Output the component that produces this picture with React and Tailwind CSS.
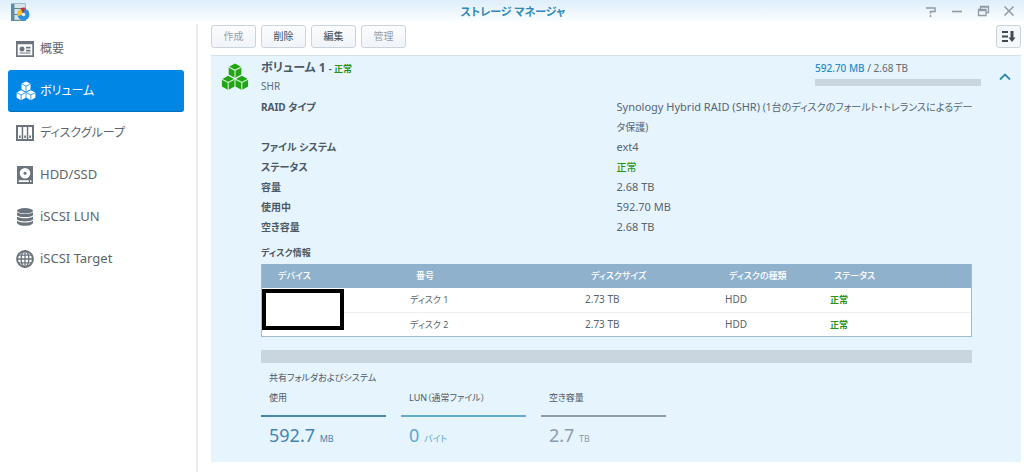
import React from 'react';

const OverviewIcon = () => (
  <svg width="18" height="18" viewBox="0 0 18 18" fill="currentColor" aria-hidden="true">
    <path fillRule="evenodd" d="M0 1h18v16H0V1zm1.7 3.2v11.1h14.6V4.200z" />
    <circle cx="6" cy="9" r="2.500" />
    <path d="M10 6.800h4.500v1.700H10zM10 9.800h4.500v1.700H10zM3.500 12.600h11v1h-11z" />
  </svg>
);

const CubesIcon = ({ size, fill, line }) => (
  <svg width={size} height={size} viewBox="0 0 28 28" aria-hidden="true">
    {[[14, 7.6], [7.2, 19.8], [20.8, 19.8]].map(([x, y]) => (
      <g key={x} transform={`translate(${x} ${y})`}>
        <path d="M0-7L6.300-3.600V3.800L0 7.300-6.300 3.800V-3.600z" fill={fill} />
        <path d="M-6.300-3.600L0-.3 6.300-3.600M0-.3V7.300" fill="none" stroke={line} strokeWidth="1.100" />
      </g>
    ))}
  </svg>
);

const GroupIcon = () => (
  <svg width="18" height="18" viewBox="0 0 18 18" fill="currentColor" aria-hidden="true">
    <path
      fillRule="evenodd"
      d="M0 1h18v16H0zM2 3v12h3.700V3zM7.200 3v12h3.600V3zM12.300 3v12H16V3z"
    />
    <path d="M3 11.500h1.700V14H3zM8.200 11.500h1.700V14H8.200zM13.300 11.500H15V14h-1.700z" />
  </svg>
);

const DriveIcon = () => (
  <svg width="18" height="18" viewBox="0 0 18 18" fill="currentColor" aria-hidden="true">
    <path
      fillRule="evenodd"
      d="M1 0h16v18H1zM9 2a5.300 5.300 0 1 0 0 10.600A5.300 5.300 0 0 0 9 2zM2.800 14.200v1.800h10v-1.800zM14 14.200v1.800h1.400v-1.800z"
    />
    <circle cx="9" cy="7.300" r="1.500" />
  </svg>
);

const LunIcon = () => (
  <svg width="18" height="18" viewBox="0 0 18 18" fill="currentColor" aria-hidden="true">
    <ellipse cx="9" cy="2.800" rx="8" ry="2.700" />
    <path d="M1 4.200c2 2.400 14 2.400 16 0v3c-2 2.500-14 2.500-16 0z" />
    <path d="M1 8.500c2 2.400 14 2.400 16 0v3c-2 2.500-14 2.500-16 0z" />
    <path d="M1 12.800c2 2.400 14 2.400 16 0v2.500c-2 3.400-14 3.400-16 0z" />
  </svg>
);

const TargetIcon = () => (
  <svg width="18" height="18" viewBox="0 0 18 18" fill="none" stroke="currentColor" strokeWidth="1.300" aria-hidden="true">
    <circle cx="9" cy="9" r="7.900" strokeWidth="2" />
    <ellipse cx="9" cy="9" rx="3.900" ry="8" />
    <path d="M9 1v16M1 9h16M2.500 5.200h13M2.500 12.800h13" />
  </svg>
);

const AppIcon = () => (
  <svg width="20" height="19" viewBox="0 0 20 19" aria-hidden="true">
    <rect x="1" y="0" width="15" height="18" rx="1" fill="#9dbdcc" />
    <path d="M1 1h3v17H1z" fill="#5c8ca5" />
    <path d="M5 1h10v4H5zM5 6h10v5H5zM5 12h10v5H5z" fill="#d5e5ec" />
    <path d="M4 5.500h12M4 11.500h12M4 17.300h12" stroke="#60879a" strokeWidth="1" />
    <circle cx="13.500" cy="11.500" r="6" fill="#2f8fdc" />
    <path d="M13.500 11.500L7.500 13A6.500 6.500 0 0 1 11 5.800z" fill="#f3c231" />
    <path d="M13.500 11.500L10.500 5.300a7 7 0 0 1 4.500-.8z" fill="#c5312e" />
    <circle cx="13.500" cy="11.500" r="1.800" fill="#e2eff6" />
  </svg>
);

const navItems = [
  { name: '概要', icon: <OverviewIcon />, size: 'text-xs' },
  { name: 'ボリューム', icon: <CubesIcon size={20} fill="#ffffff" line="#0086e5" />, size: 'text-xs', active: true },
  { name: 'ディスクグループ', icon: <GroupIcon />, size: 'text-xs' },
  { name: 'HDD/SSD', icon: <DriveIcon />, size: 'text-[13px]' },
  { name: 'iSCSI LUN', icon: <LunIcon />, size: 'text-[13px]' },
  { name: 'iSCSI Target', icon: <TargetIcon />, size: 'text-[13px]' },
];

const actions = [
  { name: '作成', disabled: true },
  { name: '削除' },
  { name: '編集' },
  { name: '管理', disabled: true },
];

const details = [
  {
    label: 'RAID タイプ',
    value: 'Synology Hybrid RAID (SHR) ',
    note: '(1台のディスクのフォールト・トレランスによるデータ保護)',
  },
  { label: 'ファイル システム', value: 'ext4' },
  { label: 'ステータス', value: '正常', ok: true },
  { label: '容量', value: '2.68 TB' },
  { label: '使用中', value: '592.70 MB' },
  { label: '空き容量', value: '2.68 TB' },
];

const disks = ['ディスク 1', 'ディスク 2'];

const usage = [
  { label: '使用', value: '592.7', unit: 'MB', line: 'border-[#4a86a8]', text: 'text-[#4583b4]' },
  { label: 'LUN（通常ファイル）', value: '0', unit: 'バイト', line: 'border-[#62adcf]', text: 'text-[#5aa9d6]' },
  { label: '空き容量', value: '2.7', unit: 'TB', line: 'border-[#8d9dab]', text: 'text-[#8b9cac]' },
];

const TitleBar = () => (
  <header className="flex h-6 items-center bg-linear-to-b from-[#deeefa] to-white px-2">
    <div className="flex flex-1 items-center pl-[2px]">
      <AppIcon />
    </div>
    <h1 className="text-[11px] leading-4 font-bold text-[#2f8ab8]">ストレージ マネージャ</h1>
    <div className="flex flex-1 items-center justify-end gap-3 text-[#8e9ba5]">
      <button type="button" aria-label="ヘルプ" className="w-[14px]">
        <svg width="14" height="14" viewBox="0 0 14 14" fill="none" stroke="currentColor" strokeWidth="1.500">
          <path d="M2 3h9v3.500H6.500v2.300M6.500 10v2" />
        </svg>
      </button>
      <button type="button" aria-label="最小化" className="w-[14px]">
        <svg width="14" height="14" viewBox="0 0 14 14" fill="none" stroke="currentColor" strokeWidth="1.600">
          <path d="M2 6.500h10" />
        </svg>
      </button>
      <button type="button" aria-label="元に戻す" className="w-[14px]">
        <svg width="14" height="14" viewBox="0 0 14 14" fill="none" stroke="currentColor" strokeWidth="1.300">
          <path d="M4.500 4V1.500h8v6H10.500M4.500 2h8M2.500 4.500h7.500v6H2.500zM2.500 5.500H10" />
        </svg>
      </button>
      <button type="button" aria-label="閉じる" className="w-[14px]">
        <svg width="14" height="14" viewBox="0 0 14 14" fill="none" stroke="currentColor" strokeWidth="1.500">
          <path d="M2.500 1.500l9 9M11.500 1.500l-9 9" />
        </svg>
      </button>
    </div>
  </header>
);

const Sidebar = () => (
  <nav className="w-[198px] shrink-0 border-r-2 border-[#e9ebed] pt-1 pr-3 pl-2">
    {navItems.map((item) => (
      <a
        key={item.name}
        href="#"
        className={`flex h-[42px] items-center gap-1 pl-2 ${item.size} ${
          item.active ? 'rounded-[3px] border-b border-[#0072c6] bg-[#0086e5] text-white' : 'text-[#5d666e]'
        }`}
      >
        <span className={item.active ? 'w-5' : 'w-5 text-[#6b747c]'}>{item.icon}</span>
        {item.name}
      </a>
    ))}
  </nav>
);

const Toolbar = () => (
  <div className="flex items-center justify-between">
    <div className="flex gap-[5px]">
      {actions.map((action) => (
        <button
          key={action.name}
          type="button"
          disabled={action.disabled}
          className="h-[23px] w-[45px] rounded-[3px] border border-[#cbd3dc] bg-linear-to-b from-[#fbfcfd] to-[#f0f4f8] text-[10px] text-[#3f4952] disabled:text-[#98a1a9]"
        >
          {action.name}
        </button>
      ))}
    </div>
    <button
      type="button"
      aria-label="並べ替え"
      className="flex h-[23px] w-[25px] items-center justify-center rounded-[3px] border border-[#cbd3dc] bg-[#f5f8fb] text-[#3f4952]"
    >
      <svg width="15" height="13" viewBox="0 0 15 13" fill="currentColor">
        <path d="M1 1h6v2H1zM1 5.500h6v2H1zM1 10h6v2H1zM9.500 1h3v6.500h2L11 12 7.500 7.500h2z" />
      </svg>
    </button>
  </div>
);

const DiskTable = () => (
  <div className="relative border border-t-0 border-[#a3bccb] bg-white">
    <table className="w-full table-fixed border-collapse text-left text-[9px]">
      <colgroup>
        <col className="w-[142px]" />
        <col className="w-[175px]" />
        <col className="w-[140px]" />
        <col className="w-[105px]" />
        <col />
      </colgroup>
      <thead>
        <tr className="h-6 bg-[#8fb1cb] text-white">
          <th className="pl-4 font-medium">デバイス</th>
          <th className="pl-3 font-medium">番号</th>
          <th className="pl-3 font-medium">ディスクサイズ</th>
          <th className="pl-[10px] font-medium">ディスクの種類</th>
          <th className="pl-[10px] font-medium">ステータス</th>
        </tr>
      </thead>
      <tbody>
        {disks.map((disk) => (
          <tr key={disk} className="h-6 border-b border-[#eceff1] text-[#59636c] last:border-b-0">
            <td></td>
            <td className="pl-[6px]">{disk}</td>
            <td className="pl-[6px] text-[10px]">2.73 TB</td>
            <td className="pl-[6px] text-[10px]">HDD</td>
            <td className="pl-[6px] font-bold text-[#2c9318]">正常</td>
          </tr>
        ))}
      </tbody>
    </table>
    {/* covers the device names */}
    <div className="absolute top-[25px] left-0 h-[41px] w-[82px] border-4 border-black bg-white"></div>
  </div>
);

const VolumePanel = () => (
  <section className="mt-[7px] border-t border-[#d3e1eb] bg-[#e6f4fe] px-[10px] pb-[11px]">
    <div className="flex items-start pt-1">
      <div className="w-10 shrink-0 pt-[3px]">
        <CubesIcon size={28} fill="#22a512" line="#d9f2dd" />
      </div>
      <div className="flex-1">
        <h2 className="text-xs leading-4 font-bold text-[#4b5965]">
          ボリューム 1 <span className="text-[9px]">- <span className="text-[#2c9318]">正常</span></span>
        </h2>
        <p className="text-[10px] leading-[18px] text-[#5d6b77]">SHR</p>
      </div>
      <div className="w-[166px] text-[10px] leading-4 text-[#5d6b77]">
        <p>
          <span className="font-medium text-[#288dc8]">592.70 MB</span> / 2.68 TB
        </p>
        <div className="mt-[3px] h-[7px] bg-[#c9d5df]"></div>
      </div>
      <button type="button" aria-label="折りたたむ" className="flex w-[30px] justify-end pt-3">
        <svg width="12" height="10" viewBox="0 0 12 10" fill="none" stroke="#318bad" strokeWidth="1.800">
          <path d="M1 7.500l5-5 5 5" />
        </svg>
      </button>
    </div>

    <div className="mr-[39px] ml-10 pt-[2px]">
      <dl className="text-[11px] leading-5 text-[#566572]">
        {details.map((row) => (
          <div key={row.label} className="grid grid-cols-2">
            <dt className="text-[10px] leading-5 font-bold text-[#4b5965]">{row.label}</dt>
            <dd className={row.ok ? 'text-[10px] leading-5 font-medium text-[#2c9318]' : '-mr-2'}>
              {row.value}
              {row.note && <span className="text-[10px]">{row.note}</span>}
            </dd>
          </div>
        ))}
      </dl>

      <h3 className="mt-2 mb-[3px] text-[9px] leading-4 font-bold text-[#4b5965]">ディスク情報</h3>
      <DiskTable />

      <div className="mt-[13px] h-[13px] bg-[#c9d5df]"></div>
      <p className="mt-[5px] pl-2 text-[9px] leading-5 text-[#4b5965]">共有フォルダおよびシステム</p>
      <div className="flex gap-[15px]">
        {usage.map((item) => (
          <div key={item.label} className="w-[125px]">
            <p className={`border-b-2 pb-[7px] pl-2 text-[9px] leading-5 text-[#4b5965] ${item.line}`}>{item.label}</p>
            <p className={`pt-[6px] pl-2 text-lg leading-6 ${item.text}`}>
              {item.value} <span className="text-[9px]">{item.unit}</span>
            </p>
          </div>
        ))}
      </div>
    </div>
  </section>
);

const App = () => {
  return (
    <div className="flex min-h-screen flex-col bg-white font-['Noto_Sans','Noto_Sans_CJK_JP',sans-serif] [font-feature-settings:'palt']" lang="ja">
      <TitleBar />
      <div className="flex flex-1">
        <Sidebar />
        <main className="min-w-0 flex-1 pt-px pr-[3px] pl-[13px]">
          <Toolbar />
          <VolumePanel />
        </main>
      </div>
    </div>
  );
};

export default App;
